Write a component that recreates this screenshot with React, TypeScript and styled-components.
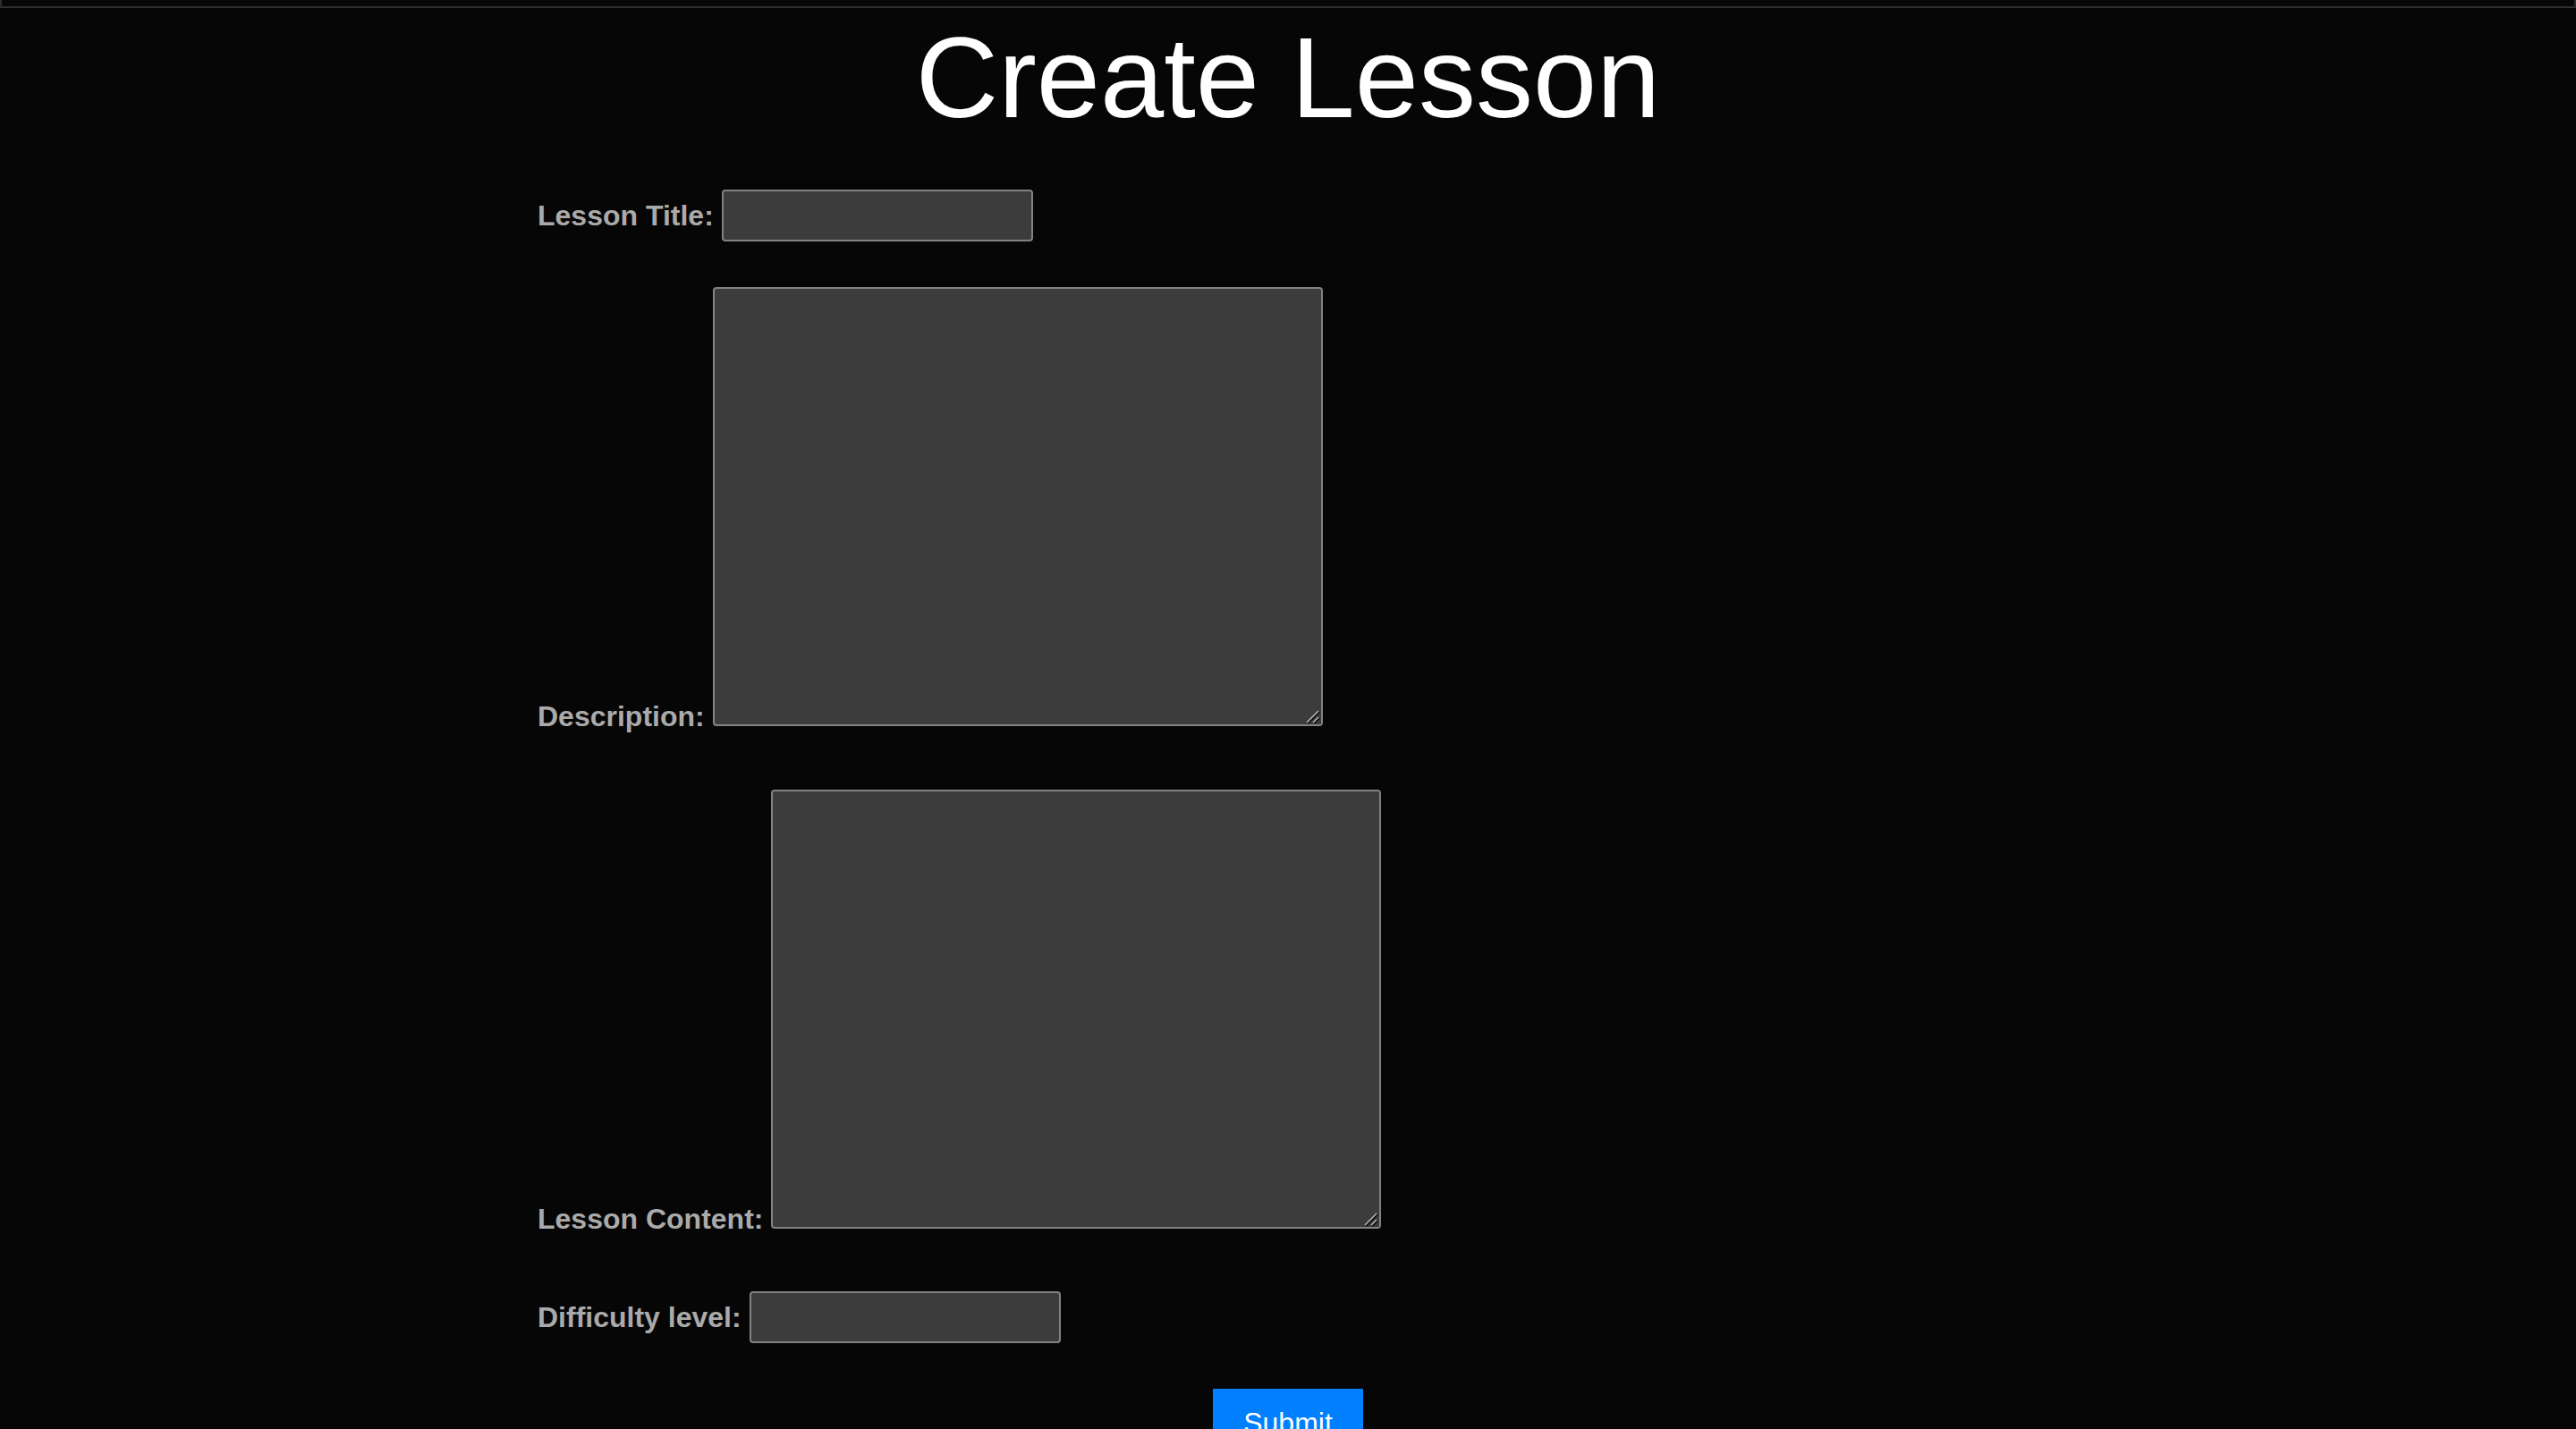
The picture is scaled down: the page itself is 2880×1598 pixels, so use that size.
import React from "react";
import styled, { createGlobalStyle } from "styled-components";

const GlobalStyle = createGlobalStyle`
  html, body {
    margin: 0;
    padding: 0;
    background: #060606;
  }
  body {
    font-family: "Liberation Sans", Arial, sans-serif;
    color: #ffffff;
    min-height: 1598px;
    overflow: hidden;
  }
`;

const Page = styled.div`
  width: 2880px;
  min-height: 1598px;
  background: #060606;
  display: flex;
  flex-direction: column;
`;

const TopBar = styled.div`
  height: 7px;
  border: 2px solid #2e2e2e;
  border-top: none;
  background: #080808;
`;

const Title = styled.h1`
  margin: 4px 0 0;
  font-family: "Liberation Sans", Arial, sans-serif;
  font-size: 128px;
  font-weight: 400;
  line-height: 148px;
  text-align: center;
  color: #ffffff;
`;

const Form = styled.form`
  width: 1678px;
  margin: 0 auto;
  display: flex;
  flex-direction: column;
`;

const Row = styled.div<{ $space: number; $multiline?: boolean }>`
  display: flex;
  align-items: ${(p) => (p.$multiline ? "flex-end" : "baseline")};
  gap: 9px;
  margin-top: ${(p) => p.$space}px;
`;

const Label = styled.label<{ $multiline?: boolean }>`
  font-family: "Liberation Sans", Arial, sans-serif;
  font-size: 32px;
  font-weight: 700;
  line-height: 36px;
  color: #aaaaaa;
  white-space: nowrap;
  margin-bottom: ${(p) => (p.$multiline ? "-7px" : "0")};
`;

const TextInput = styled.input`
  box-sizing: border-box;
  width: 348px;
  height: 58px;
  padding: 0 8px;
  margin: 0;
  background: #3c3c3c;
  border: 2px solid #828282;
  border-radius: 4px;
  font-family: "Liberation Sans", Arial, sans-serif;
  font-size: 32px;
  color: #ffffff;
  outline: none;
`;

const TextAreaWrap = styled.div`
  position: relative;
  display: block;
`;

const TextArea = styled.textarea`
  box-sizing: border-box;
  width: 682px;
  height: 491px;
  padding: 4px;
  margin: 0;
  background: #3c3c3c;
  border: 2px solid #828282;
  border-radius: 4px;
  font-family: "Liberation Sans", Arial, sans-serif;
  font-size: 32px;
  color: #ffffff;
  outline: none;
  resize: both;
  display: block;
`;

const Grip = styled.svg`
  position: absolute;
  right: 2px;
  bottom: 2px;
  width: 18px;
  height: 18px;
  pointer-events: none;
  background: #3c3c3c;
`;

const Actions = styled.div`
  display: flex;
  justify-content: center;
  margin-top: 51px;
`;

const SubmitButton = styled.button`
  background: #0080ff;
  color: #ffffff;
  border: none;
  border-radius: 0;
  padding: 20px 34px;
  font-family: "Liberation Sans", Arial, sans-serif;
  font-size: 32px;
  line-height: normal;
  cursor: pointer;
`;

function ResizeGrip() {
  return (
    <Grip viewBox="0 0 18 18" aria-hidden="true">
      <line x1="3" y1="17" x2="16" y2="4" stroke="#111" strokeWidth="2.4" />
      <line x1="2" y1="16" x2="15" y2="3" stroke="#b5b5b5" strokeWidth="1.6" />
      <line x1="10" y1="17" x2="16" y2="11" stroke="#111" strokeWidth="2.4" />
      <line x1="9" y1="16" x2="15" y2="10" stroke="#b5b5b5" strokeWidth="1.6" />
    </Grip>
  );
}

function Area({ id }: { id: string }) {
  return (
    <TextAreaWrap>
      <TextArea id={id} />
      <ResizeGrip />
    </TextAreaWrap>
  );
}

export default function App() {
  return (
    <>
      <GlobalStyle />
      <Page>
        <TopBar />
        <Title>Create Lesson</Title>
        <Form onSubmit={(e) => e.preventDefault()}>
          <Row $space={51}>
            <Label htmlFor="title">Lesson Title:</Label>
            <TextInput id="title" type="text" />
          </Row>
          <Row $space={51} $multiline>
            <Label htmlFor="description" $multiline>
              Description:
            </Label>
            <Area id="description" />
          </Row>
          <Row $space={71} $multiline>
            <Label htmlFor="content" $multiline>
              Lesson Content:
            </Label>
            <Area id="content" />
          </Row>
          <Row $space={70}>
            <Label htmlFor="difficulty">Difficulty level:</Label>
            <TextInput id="difficulty" type="text" />
          </Row>
          <Actions>
            <SubmitButton type="submit">Submit</SubmitButton>
          </Actions>
        </Form>
      </Page>
    </>
  );
}
